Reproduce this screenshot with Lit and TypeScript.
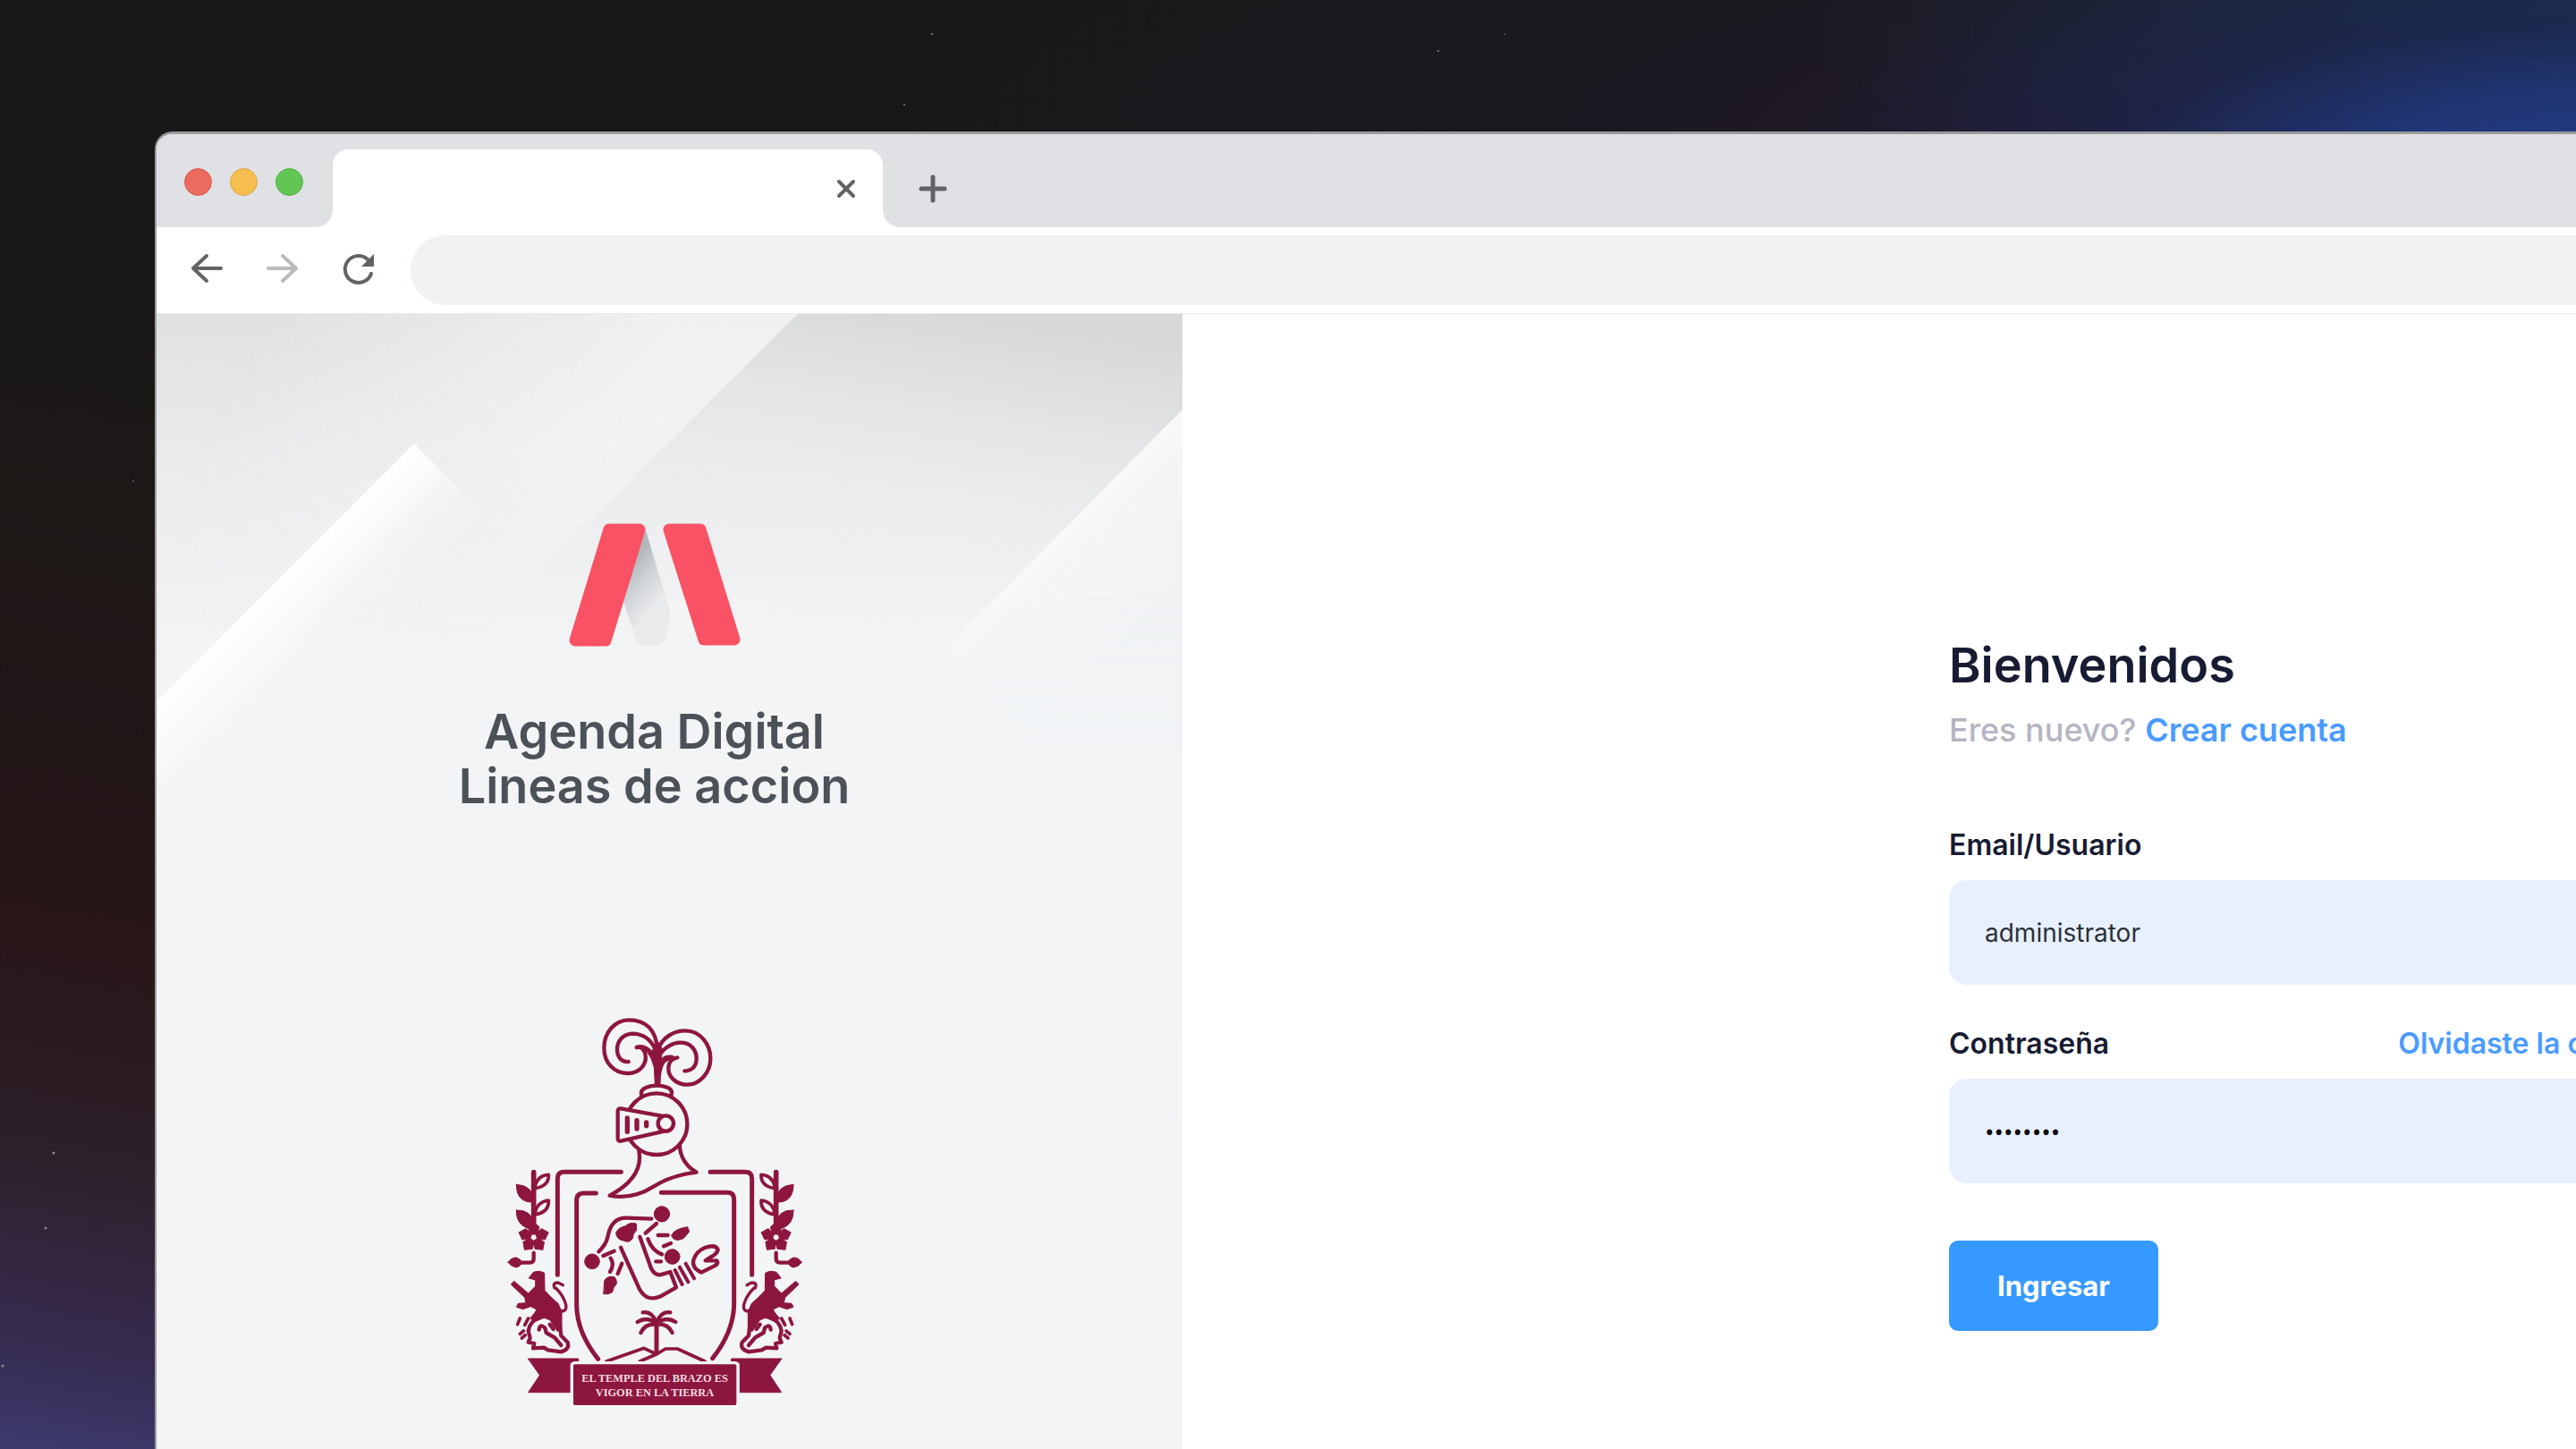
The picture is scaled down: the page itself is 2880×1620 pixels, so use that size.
import { LitElement, html, css, svg } from "lit";
import { customElement } from "lit/decorators.js";

const sprig = svg`
  <g class="ink">
    <path d="M170 602V770" stroke-width="17" />
    <path d="M174 652Q182 612 220 610Q222 648 174 656M174 740Q182 700 220 696Q222 736 174 744" stroke-width="11" />
    <path class="solid" d="M112 643Q168 645 172 702Q112 706 112 643ZM112 729Q162 726 172 776L150 790Q110 775 112 729Z" />
    <g class="solid petals">
      <path d="M170 768L189 786L180 810H160L151 786Z" />
      <path d="M170 768L189 786L180 810H160L151 786Z" transform="rotate(72 170 820)" />
      <path d="M170 768L189 786L180 810H160L151 786Z" transform="rotate(144 170 820)" />
      <path d="M170 768L189 786L180 810H160L151 786Z" transform="rotate(216 170 820)" />
      <path d="M170 768L189 786L180 810H160L151 786Z" transform="rotate(288 170 820)" />
    </g>
    <path d="M170 872V892Q170 905 157 905H125" stroke-width="13" />
    <path class="solid" d="M84 904Q96 887 112 888Q128 894 130 904Q128 916 112 921Q96 920 84 904Z" />
    <path class="solid" d="M154 956L168 938Q188 929 206 940L207 998Q222 1016 252 1042L264 1070V1128L250 1136L226 1098L206 1090L172 1102L158 1092Q176 1072 180 1062L160 1052L134 1061L112 1054L118 1042L144 1040L140 1022L94 978L104 967L152 1008L176 984L176 964Z" />
    <path d="M240 990Q232 972 252 972L268 980M244 990Q266 1012 274 1034Q286 1062 268 1068L250 1062" stroke-width="10" />
    <path d="M186 1092Q158 1100 152 1134L158 1158L152 1172L172 1176L168 1192L204 1190L218 1198L262 1204Q292 1196 284 1172L262 1150L258 1116M188 1130Q190 1108 208 1124L212 1140L240 1156L262 1182M228 1092L244 1116M224 1112L236 1128" stroke-width="13" />
    <path d="M116 1112L124 1092M140 1114L152 1092M124 1144L136 1134M130 1158L142 1148" stroke-width="11" />
    <path class="solid" d="M152 1227H320V1240H292V1340H152L190 1283Z" stroke-width="4" />
  </g>
`;

const frond = svg`
  <path d="M582 1106Q566 1066 536 1072M582 1108Q548 1084 518 1104M582 1112Q544 1108 529 1140" />
`;

/* Red "A" mark with its folded shadow */
@customElement("brand-mark")
export class BrandMark extends LitElement {
  static styles = css`
    :host { display: block; width: 192px; height: 138px; }
    .mark { display: block; width: 100%; height: 100%; }
    .bar { fill: #f95264; stroke: #f95264; stroke-width: 13; stroke-linejoin: round; }
  `;
  render() {
    return html`
      <svg class="mark" viewBox="0 0 192 138" aria-hidden="true">
        <defs>
          <linearGradient id="fold" x1="68" y1="45" x2="108" y2="80" gradientUnits="userSpaceOnUse">
            <stop offset="0" stop-color="#b4b7b9" />
            <stop offset="0.5" stop-color="#d3d6d8" />
            <stop offset="1" stop-color="#e8eaec" />
          </linearGradient>
        </defs>
        <path d="M86 8L113 98Q114 112 108 128Q104 137 94 137H86Q77 137 74 128L58 78Z" fill="url(#fold)" />
        <path class="bar" d="M45 7H79L41 131H7Z" />
        <path class="bar" d="M112 7H147L185 130H151Z" />
      </svg>
    `;
  }
}

/* Coat of arms with motto ribbon */
@customElement("city-crest")
export class CityCrest extends LitElement {
  static styles = css`
    :host { display: block; width: 330px; height: 438px; }
    .crest { display: block; width: 100%; height: 100%; }
    .ink { fill: none; stroke: #8d163e; stroke-width: 13; stroke-linecap: round; stroke-linejoin: round; }
    .solid { fill: #8d163e; stroke-width: 3; }
    .veil { fill: #f2f4f6; }
    .petals { stroke-width: 3; }
    .trim { stroke: #f2f4f6; stroke-width: 10; fill: #8d163e; }
    .motto { font: 700 37px "Liberation Serif", serif; fill: #f3dce4; text-anchor: middle; }
  `;
  render() {
    return html`
      <svg class="crest" viewBox="81 78 990 1314" role="img" aria-labelledby="motto-a motto-b">
        <g class="ink">
          <path d="M463 601H272Q250 601 250 623V946M762 601H880Q902 601 902 623V946" stroke-width="15" />
          <path d="M379 672H338Q314 672 314 696V1050Q316 1140 386 1228M598 670H820Q842 670 842 692V1050Q838 1140 770 1226" stroke-width="15" />
        </g>
        <g class="ink">
          <path d="M523 530Q540 618 425 680Q500 695 572 650Q630 612 716 602Q660 570 659 505" />
          <path class="veil" d="M532 346Q526 326 546 318Q582 304 620 318Q638 326 631 346" />
          <circle class="veil" cx="582" cy="440" r="103" />
          <path class="veil" d="M612 415L462 388Q452 387 452 398V488Q452 499 462 497L612 463Z" />
          <circle class="veil" cx="613" cy="438" r="26" />
          <path d="M484 420V466M516 428V456M548 435V446" stroke-width="16" />
          <path d="M584 190C582 124 545 91 490 91C440 91 406 135 406 185C406 235 440 270 485 270C530 270 549 235 545 210C542 190 532 180 515 183" />
          <path d="M578 190C560 150 530 137 500 137C465 140 450 165 450 190C450 216 465 233 488 231" />
          <path d="M586 192C600 150 640 127 680 127C730 127 763 175 763 220C763 270 725 308 685 308C645 308 622 280 622 254C622 234 634 220 652 217" />
          <path d="M588 215C606 182 640 165 665 167C700 168 716 195 716 220C716 248 700 262 676 262" />
          <path class="solid" d="M514 178Q558 184 574 250L577 306H594Q594 258 608 236Q620 222 652 220L634 210Q608 208 598 222L600 186L584 160L578 182L566 194Q540 168 514 178Z" />
        </g>
        <g class="ink">
          <circle class="solid" cx="600" cy="742" r="26" />
          <circle class="solid" cx="366" cy="901" r="25" />
          <circle class="solid" cx="635" cy="885" r="25" />
          <path d="M388 868Q412 846 418 820Q430 754 480 755L565 758M582 774L545 806M587 813H620M606 850L630 840M553 826Q568 866 600 877M580 901H597" />
          <path class="solid" d="M446 806Q450 788 478 782Q492 768 514 774L515 796Q502 808 502 824Q490 840 474 832Q448 828 446 806ZM632 814Q640 792 686 785L692 800Q686 810 672 824Q640 838 632 814ZM408 964Q420 946 442 954Q450 966 448 976Q436 988 434 1004Q418 1014 405 1010Z" />
          <path d="M403 882L440 866M426 936Q442 912 428 890M452 942L466 908" />
          <path d="M526 818L564 924Q578 952 602 944L628 936L648 988L606 1012Q552 1044 524 992L462 854" />
          <path d="M644 930L668 978M660 920L688 970M680 908L708 958" stroke-width="12" />
          <path d="M732 938Q700 922 706 896Q716 866 744 855Q780 842 788 862Q784 876 764 886L746 898L784 898Q792 908 776 916Z" />
          <path d="M582 1110V1204" stroke-width="15" />
          ${frond}
          <g transform="translate(1164 0) scale(-1 1)">${frond}</g>
          <path d="M414 1236L540 1192L582 1212L526 1236M582 1212L612 1194H652L744 1236" stroke-width="11" />
        </g>
        ${sprig}
        <g transform="translate(1153 0) scale(-1 1)">${sprig}</g>
        <rect class="trim" x="298" y="1241" width="557" height="147" rx="10" />
        <text class="motto" id="motto-a" x="576" y="1306">EL TEMPLE DEL BRAZO ES</text>
        <text class="motto" id="motto-b" x="576" y="1352">VIGOR EN LA TIERRA</text>
      </svg>
    `;
  }
}

/* Tab strip and address bar of the browser window */
@customElement("browser-chrome")
export class BrowserChrome extends LitElement {
  static styles = css`
    :host { display: block; }
    button { border: 0; padding: 0; background: none; display: grid; place-items: center; }
    svg { display: block; }
    .strip { display: flex; height: 104px; background: #dfe1e5; box-sizing: border-box; padding: 17px 0 0 31px; align-items: stretch; }
    .lights { display: flex; gap: 20px; align-items: center; padding-bottom: 15px; width: 166px; box-sizing: border-box; }
    .light { width: 31px; height: 31px; border-radius: 50%; box-sizing: border-box; border: 1px solid; }
    .red { background: #ed6a5f; border-color: #d8594f; }
    .amber { background: #f6be50; border-color: #dda63f; }
    .green { background: #62c655; border-color: #52ad45; }
    .tab { position: relative; width: 615px; background: #fff; border-radius: 18px 18px 0 0; display: flex; justify-content: flex-end; align-items: center; box-sizing: border-box; padding-right: 28px; }
    .tab::before, .tab::after { content: ""; position: absolute; bottom: 0; width: 18px; height: 18px; }
    .tab::before { right: 100%; background: radial-gradient(circle at 0 0, transparent 17px, #fff 18px); }
    .tab::after { left: 100%; background: radial-gradient(circle at 100% 0, transparent 17px, #fff 18px); }
    .plus { margin-left: 38px; }
    .bar { display: flex; align-items: center; height: 97px; box-sizing: border-box; padding-left: 36px; background: #fff; border-bottom: 1px solid #e8eaec; }
    .nav { width: 40px; margin-right: 45px; }
    .reload { margin-right: 38px; }
    .address { flex: 1; height: 78px; border: 0; border-radius: 39px; background: #f0f2f3; padding: 0 39px; font: 28px Inter, sans-serif; }
    .line { fill: none; stroke: #616365; stroke-width: 4; stroke-linecap: round; stroke-linejoin: round; }
    .bold { stroke-width: 5; }
    .faint { stroke: #b9bbbc; }
    .fill { fill: #616365; }
  `;
  render() {
    return html`
      <div class="strip">
        <div class="lights">
          <button class="light red" aria-label="Close window"></button>
          <button class="light amber" aria-label="Minimize"></button>
          <button class="light green" aria-label="Maximize"></button>
        </div>
        <div class="tab">
          <button aria-label="Close tab">
            <svg width="26" height="26" viewBox="0 0 26 26"><path class="line" d="M5 5L21 21M21 5L5 21" /></svg>
          </button>
        </div>
        <button class="plus" aria-label="New tab">
          <svg width="36" height="36" viewBox="0 0 36 36"><path class="line bold" d="M18 5V31M5 18H31" /></svg>
        </button>
      </div>
      <div class="bar">
        <button class="nav" aria-label="Back">
          <svg width="40" height="40" viewBox="0 0 40 40"><path class="line" d="M36 18H6M20 4L5 18L20 32" /></svg>
        </button>
        <button class="nav" aria-label="Forward">
          <svg width="40" height="40" viewBox="0 0 40 40"><path class="line faint" d="M4 18H34M20 4L35 18L20 32" /></svg>
        </button>
        <button class="nav reload" aria-label="Reload">
          <svg width="40" height="40" viewBox="0 0 40 40">
            <path class="line" d="M34 24A15 15 0 1 1 30 8" />
            <path class="fill" d="M37 2V16H23Z" />
          </svg>
        </button>
        <input class="address" type="text" aria-label="Address" />
      </div>
    `;
  }
}

@customElement("brand-panel")
export class BrandPanel extends LitElement {
  static styles = css`
    :host { display: flex; position: relative; flex-direction: column; align-items: center; background: #f2f4f6; overflow: hidden; box-sizing: border-box; padding: 234px 34px 0 0; }
    .paper { position: absolute; inset: 0; width: 100%; height: 100%; }
    .content { position: relative; display: flex; flex-direction: column; align-items: center; }
    .title { margin: 64px 0 0; font: 600 54px/61px Inter, sans-serif; color: #4c5258; text-align: center; }
    .crest { margin-top: 227px; }
  `;
  render() {
    return html`
      <svg class="paper" viewBox="0 0 1147 1270" preserveAspectRatio="none" aria-hidden="true">
        <defs>
          <linearGradient id="top" x1="0" y1="0" x2="0" y2="1"><stop offset="0" stop-color="#dfe1e2" /><stop offset="0.500" stop-color="#ebeced" /><stop offset="1" stop-color="#f2f4f6" /></linearGradient>
          <linearGradient id="glow" x1="120" y1="0" x2="480" y2="200" gradientUnits="userSpaceOnUse"><stop offset="0" stop-color="#f4f4f5" stop-opacity="0" /><stop offset="1" stop-color="#f4f4f5" stop-opacity="0.800" /></linearGradient>
          <linearGradient id="gfade" x1="0" y1="0" x2="0" y2="1"><stop offset="0.400" stop-color="#fff" /><stop offset="1" stop-color="#000" /></linearGradient>
          <mask id="gmask"><rect width="1147" height="370" fill="url(#gfade)" /></mask>
          <linearGradient id="shade" x1="900" y1="0" x2="850" y2="310" gradientUnits="userSpaceOnUse"><stop offset="0" stop-color="#d6d8d9" /><stop offset="0.400" stop-color="#e4e6e7" /><stop offset="1" stop-color="#f0f2f3" stop-opacity="0" /></linearGradient>
          <linearGradient id="left" x1="144" y1="290" x2="224" y2="370" gradientUnits="userSpaceOnUse"><stop offset="0" stop-color="#fff" /><stop offset="0.250" stop-color="#fbfcfc" stop-opacity="0.900" /><stop offset="0.700" stop-color="#f6f7f8" stop-opacity="0.400" /><stop offset="1" stop-color="#f4f5f7" stop-opacity="0" /></linearGradient>
          <linearGradient id="right" x1="1015" y1="240" x2="1110" y2="335" gradientUnits="userSpaceOnUse"><stop offset="0" stop-color="#f8f8f8" /><stop offset="0.300" stop-color="#f4f5f6" /><stop offset="1" stop-color="#f0f2f4" /></linearGradient>
          <linearGradient id="rfade" x1="0" y1="0" x2="0" y2="1"><stop offset="0.350" stop-color="#fff" /><stop offset="0.650" stop-color="#000" /></linearGradient>
          <mask id="rmask"><rect x="850" y="80" width="300" height="640" fill="url(#rfade)" /></mask>
          <linearGradient id="beam" x1="640" y1="560" x2="800" y2="400" gradientUnits="userSpaceOnUse"><stop offset="0" stop-color="#f4f4f4" stop-opacity="0" /><stop offset="0.500" stop-color="#f5f5f5" /><stop offset="1" stop-color="#f4f4f4" stop-opacity="0" /></linearGradient>
        </defs>
        <rect width="1147" height="380" fill="url(#top)" />
        <path d="M0 0H717L345 370H0Z" fill="url(#glow)" mask="url(#gmask)" />
        <path d="M717 0H1147V380H335Z" fill="url(#shade)" />
        <path d="M560 320H700L1147 767V900H1140Z" fill="url(#beam)" />
        <path d="M0 434L288 145L400 257L0 657Z" fill="url(#left)" />
        <path d="M1147 107L883 374L1147 650Z" fill="url(#right)" mask="url(#rmask)" />
      </svg>
      <div class="content">
        <brand-mark></brand-mark>
        <h1 class="title">Agenda Digital<br />Lineas de accion</h1>
        <city-crest class="crest"></city-crest>
      </div>
    `;
  }
}

@customElement("login-form")
export class LoginForm extends LitElement {
  static styles = css`
    :host { display: block; width: 883px; font-family: Inter, sans-serif; color: #181c32; }
    .title { margin: 0; font-size: 54px; line-height: 60px; font-weight: 600; }
    .sub { margin: 18px 0 0; font-size: 36px; line-height: 48px; font-weight: 500; color: #b5b5c3; }
    .link { color: #4a9bff; text-decoration: none; font-weight: 600; }
    .head { display: flex; justify-content: space-between; font-size: 32px; line-height: 40px; font-weight: 600; }
    .field { margin-top: 46px; }
    .first { margin-top: 85px; }
    .box { display: block; width: 100%; height: 117px; margin-top: 19px; box-sizing: border-box; border: 0; border-radius: 20px; background: #e8f0fe; padding: 0 40px; font: 400 28px Inter, sans-serif; color: #2b3038; }
    .secret { font: 400 28px "Open Sans", sans-serif; color: #000; }
    .submit { margin-top: 64px; width: 234px; height: 101px; border: 0; border-radius: 10px; background: #3699ff; color: #fff; font: 700 31px Inter, sans-serif; }
  `;
  render() {
    return html`
      <form>
        <h2 class="title">Bienvenidos</h2>
        <p class="sub">Eres nuevo? <a class="link" href="#">Crear cuenta</a></p>
        <div class="field first">
          <div class="head"><label for="user">Email/Usuario</label></div>
          <input class="box" id="user" type="text" .value=${"administrator"} />
        </div>
        <div class="field">
          <div class="head"><label for="pass">Contraseña</label><a class="link" href="#">Olvidaste la contraseña?</a></div>
          <input class="box secret" id="pass" type="password" .value=${"abcdefgh"} />
        </div>
        <button class="submit" type="button">Ingresar</button>
      </form>
    `;
  }
}

@customElement("app-root")
export class AppRoot extends LitElement {
  static styles = css`
    :host {
      display: flex; position: relative; box-sizing: border-box; min-height: 100vh; padding: 147px 0 0 173px; overflow: hidden;
      background:
        radial-gradient(ellipse 900px 260px at 101% 180px, #213c88 0%, rgba(32, 54, 120, 0.9) 30%, rgba(30, 36, 84, 0.5) 60%, rgba(30, 26, 44, 0) 100%),
        radial-gradient(ellipse 900px 300px at 101% 0, #17304a 0%, rgba(26, 42, 62, 0.8) 45%, rgba(28, 26, 32, 0) 100%),
        radial-gradient(ellipse 1900px 420px at 96% 160px, rgba(36, 28, 54, 0.9) 0%, rgba(28, 24, 32, 0.8) 60%, rgba(22, 22, 22, 0) 100%),
        linear-gradient(10deg, #3c3a6e 0, #362b4e 130px, #2d202a 330px, #281618 580px, #211516 800px, #1c1816 1050px, #171717 1350px);
    }
    .stars { position: absolute; left: 0; top: 0; width: 100%; height: 100%; fill: #8a8790; }
    .window { position: relative; flex: none; width: 130vw; display: flex; flex-direction: column; border: solid #9b9a9d; border-width: 3px 0 0 2px; border-radius: 20px 0 0 0; overflow: hidden; background: #fff; }
    .page { flex: 1; display: grid; grid-template-columns: 1147px 1fr; }
    .main { display: flex; justify-content: center; padding-top: 363px; }
  `;
  render() {
    return html`
      <svg class="stars" aria-hidden="true">
        <circle cx="1042" cy="38" r="1" /><circle cx="1011" cy="117" r="1" /><circle cx="1608" cy="57" r="1" /><circle cx="1682" cy="38" r="1" opacity="0.500" />
        <circle cx="149" cy="538" r="1" opacity="0.600" /><circle cx="60" cy="1289" r="1.500" /><circle cx="51" cy="1373" r="1.500" /><circle cx="3" cy="1527" r="1.500" />
      </svg>
      <div class="window">
        <browser-chrome></browser-chrome>
        <div class="page">
          <brand-panel></brand-panel>
          <main class="main"><login-form></login-form></main>
        </div>
      </div>
    `;
  }
}
